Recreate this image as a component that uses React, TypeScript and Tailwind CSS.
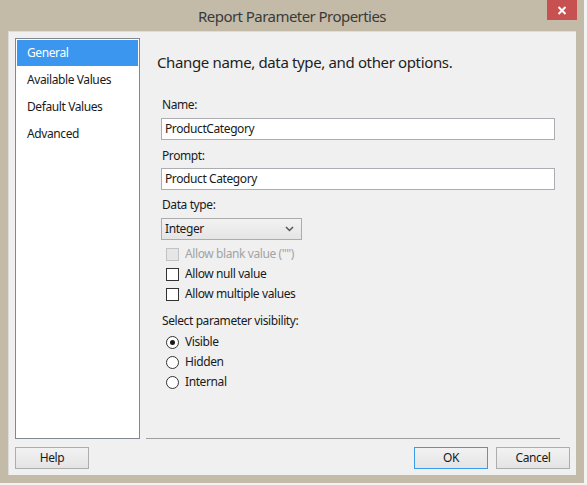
import React from "react";

const font = { fontFamily: '"Noto Sans", "Open Sans", sans-serif' };

function Checkbox({ label, disabled }: { label: string; disabled?: boolean }) {
  return (
    <div className="flex items-center h-[20px] pl-[5px]">
      <div
        className={
          "w-[13px] h-[13px] border " +
          (disabled ? "border-[#c2c2c2] bg-[#e6e6e6]" : "border-[#333333] bg-white")
        }
      />
      <span className={"ml-[6px] " + (disabled ? "text-[#a3a3a3]" : "text-[#1a1a1a]")}>{label}</span>
    </div>
  );
}

function Radio({ label, checked }: { label: string; checked?: boolean }) {
  return (
    <div className="flex items-center h-[20px] pl-[5px]">
      <div className="w-[13px] h-[13px] rounded-full border border-[#333333] bg-white flex items-center justify-center">
        {checked && <div className="w-[5px] h-[5px] rounded-full bg-[#1a1a1a]" />}
      </div>
      <span className="ml-[6px] text-[#1a1a1a]">{label}</span>
    </div>
  );
}

function Button({ label, primary }: { label: string; primary?: boolean }) {
  return (
    <div
      className={
        "w-[74px] h-[22px] flex items-center justify-center border bg-gradient-to-b from-[#f2f2f2] to-[#e4e4e4] text-[#1a1a1a] " +
        (primary ? "border-[#3c9be8]" : "border-[#adadad]")
      }
    >
      {label}
    </div>
  );
}

export default function App() {
  return (
    <div className="w-[587px] h-[485px] bg-[#f3f3f3] text-[12px] tracking-[-0.4px]" style={font}>
      <div className="w-[584px] h-[483px] bg-[#c3bba8] flex flex-col">
        <div className="h-[31px] relative flex items-center justify-center">
          <span className="text-[15px] tracking-[-0.55px] text-[#3a3a3a] pt-[1px]">Report Parameter Properties</span>
          <div className="absolute left-[547px] top-0 w-[30px] h-[20px] bg-[#c75050] flex items-center justify-center">
            <svg width="10" height="9" viewBox="0 0 10 9">
              <path d="M1.5 1 L8.5 8 M8.5 1 L1.5 8" stroke="white" strokeWidth="2" />
            </svg>
          </div>
        </div>
        <div className="mx-[8px] h-[444px] bg-[#f0f0f0] border-t border-l border-[#dcdcdc] flex flex-col px-[6px] pt-[6px]">
          <div className="flex h-[401px]">
            <div className="w-[125px] h-[401px] bg-white border border-[#828790] p-[1px]">
              <div className="h-[26px] bg-[#3a96ee] text-white flex items-center pl-[10px]">General</div>
              <div className="h-[27px] text-[#1a1a1a] flex items-center pl-[10px]">Available Values</div>
              <div className="h-[27px] text-[#1a1a1a] flex items-center pl-[10px]">Default Values</div>
              <div className="h-[27px] text-[#1a1a1a] flex items-center pl-[10px]">Advanced</div>
            </div>
            <div className="flex-1 ml-[6px] mr-[10px] border-b border-[#a0a0a0] flex flex-col">
              <div className="pl-[11px] pt-[14px] text-[15px] tracking-[-0.36px] leading-[20px] text-[#1e1e1e]">
                Change name, data type, and other options.
              </div>
              <div className="pl-[15px] pr-[5px] flex flex-col text-[#1a1a1a]">
                <div className="mt-[25px] leading-[16px] pl-[1px]">Name:</div>
                <div className="mt-[5px] h-[22px] border border-[#abadb3] bg-white flex items-center pl-[3px]">
                  ProductCategory
                </div>
                <div className="mt-[8px] leading-[16px] pl-[1px]">Prompt:</div>
                <div className="mt-[4px] h-[22px] border border-[#abadb3] bg-white flex items-center pl-[3px]">
                  Product Category
                </div>
                <div className="mt-[7px] leading-[16px] pl-[1px]">Data type:</div>
                <div className="mt-[5px] w-[141px] h-[22px] border border-[#acacac] bg-gradient-to-b from-[#f2f2f2] to-[#e5e5e5] flex items-center justify-between pl-[3px] pr-[7px]">
                  <span>Integer</span>
                  <svg width="9" height="6" viewBox="0 0 9 6">
                    <path d="M1 1 L4.5 4.5 L8 1" stroke="#555" strokeWidth="1.5" fill="none" />
                  </svg>
                </div>
                <div className="mt-[4px] flex flex-col">
                  <Checkbox label={'Allow blank value ("")'} disabled />
                  <Checkbox label="Allow null value" />
                  <Checkbox label="Allow multiple values" />
                </div>
                <div className="mt-[9px] leading-[16px] pl-[1px]">Select parameter visibility:</div>
                <div className="mt-[3px] flex flex-col">
                  <Radio label="Visible" checked />
                  <Radio label="Hidden" />
                  <Radio label="Internal" />
                </div>
              </div>
            </div>
          </div>
          <div className="flex mt-[8px]">
            <Button label="Help" />
            <div className="flex-1" />
            <Button label="OK" primary />
            <div className="w-[8px]" />
            <Button label="Cancel" />
          </div>
        </div>
      </div>
    </div>
  );
}
